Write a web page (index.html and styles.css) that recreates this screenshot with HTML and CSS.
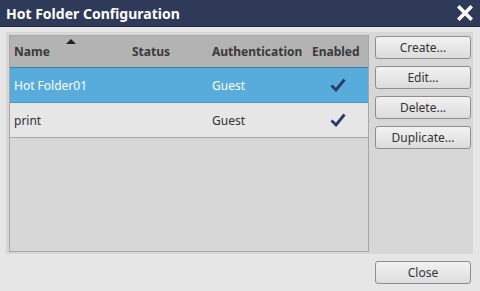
FILE: index.html
```html
<!DOCTYPE html>
<html>
<head>
<meta charset="utf-8">
<link rel="stylesheet" href="styles.css">
</head>
<body>
<div class="dialog">
  <div class="titlebar">
    <span class="title">Hot Folder Configuration</span>
    <svg class="close-x" width="16" height="16" viewBox="0 0 16 16"><path d="M2.5 2.5 L13.5 13.5 M13.5 2.5 L2.5 13.5" stroke="#fff" stroke-width="3.6" stroke-linecap="square"/></svg>
  </div>
  <div class="content">
    <div class="panel">
      <div class="table">
        <div class="row head">
          <div class="cell name">Name<span class="sort"></span></div>
          <div class="cell">Status</div>
          <div class="cell">Authentication</div>
          <div class="cell">Enabled</div>
        </div>
        <div class="row selected">
          <div class="cell">Hot Folder01</div>
          <div class="cell"></div>
          <div class="cell">Guest</div>
          <div class="cell check"><svg width="16" height="14" viewBox="0 0 16 14"><path d="M1.5 7.5 L6 12 L14.5 1.5" fill="none" stroke="#2e3a66" stroke-width="2.8"/></svg></div>
        </div>
        <div class="row plain">
          <div class="cell">print</div>
          <div class="cell"></div>
          <div class="cell">Guest</div>
          <div class="cell check"><svg width="16" height="14" viewBox="0 0 16 14"><path d="M1.5 7.5 L6 12 L14.5 1.5" fill="none" stroke="#2e3a66" stroke-width="2.8"/></svg></div>
        </div>
      </div>
      <div class="actions">
        <button class="btn">Create...</button>
        <button class="btn">Edit...</button>
        <button class="btn">Delete...</button>
        <button class="btn">Duplicate...</button>
      </div>
    </div>
    <div class="footer">
      <button class="btn">Close</button>
    </div>
  </div>
</div>
</body>
</html>
```

FILE: styles.css
```css
* { box-sizing: border-box; }
html, body { margin: 0; padding: 0; }
body {
  width: 480px;
  height: 291px;
  background: #e6e6e6;
  font-family: "Noto Sans", "Open Sans", sans-serif;
  overflow: hidden;
}
.dialog { width: 480px; height: 291px; }
.titlebar {
  height: 27px;
  background: #2f3a59;
  border-bottom: 1px solid #1e2640;
  display: flex;
  align-items: center;
  justify-content: space-between;
  padding: 0 7px 0 6px;
}
.title {
  color: #fff;
  font-weight: 700;
  font-size: 14px;
}
.close-x { display: block; }
.content { padding: 5px 7px 0 6px; }
.panel {
  height: 222px;
  background: #d7d7d7;
  padding: 3px 2px 2px 3px;
  display: flex;
  gap: 6px;
}
.table {
  width: 360px;
  height: 217px;
  border: 1px solid #a6a6a6;
  background: #d7d7d7;
}
.row {
  display: grid;
  grid-template-columns: 122px 80px 100px 1fr;
  align-items: center;
  font-size: 12px;
  color: #333;
}
.cell { padding-left: 0; white-space: nowrap; }
.row .cell:first-child { padding-left: 4px; }
.head {
  height: 31px;
  background: #b3b3b3;
  font-weight: 700;
  align-items: end;
  padding-bottom: 7px;
  color: #3a3a3a;
}
.name { position: relative; }
.sort {
  position: absolute;
  left: 56px;
  top: -4px;
  width: 0; height: 0;
  border-left: 5px solid transparent;
  border-right: 5px solid transparent;
  border-bottom: 5px solid #222;
}
.selected {
  height: 36px;
  background: #58acdc;
  color: #fff;
  border-top: 1px solid #3b7fb0;
  border-bottom: 1px solid #4a93c4;
}
.plain {
  height: 35px;
  background: #e6e6e6;
  border-bottom: 1px solid #a9a9a9;
}
.check { display: flex; justify-content: center; padding-right: 4px; }
.check svg { display: block; }
.actions {
  display: flex;
  flex-direction: column;
  gap: 7px;
  padding-top: 1px;
}
.btn {
  width: 96px;
  height: 23px;
  border: 1px solid #8e8e8e;
  border-radius: 3px;
  background: linear-gradient(#f2f2f2, #dcdcdc);
  font-family: "Noto Sans", "Open Sans", sans-serif;
  font-size: 12px;
  color: #333;
  padding: 0;
}
.footer {
  display: flex;
  justify-content: flex-end;
  padding: 7px 2px 0 0;
}
```
